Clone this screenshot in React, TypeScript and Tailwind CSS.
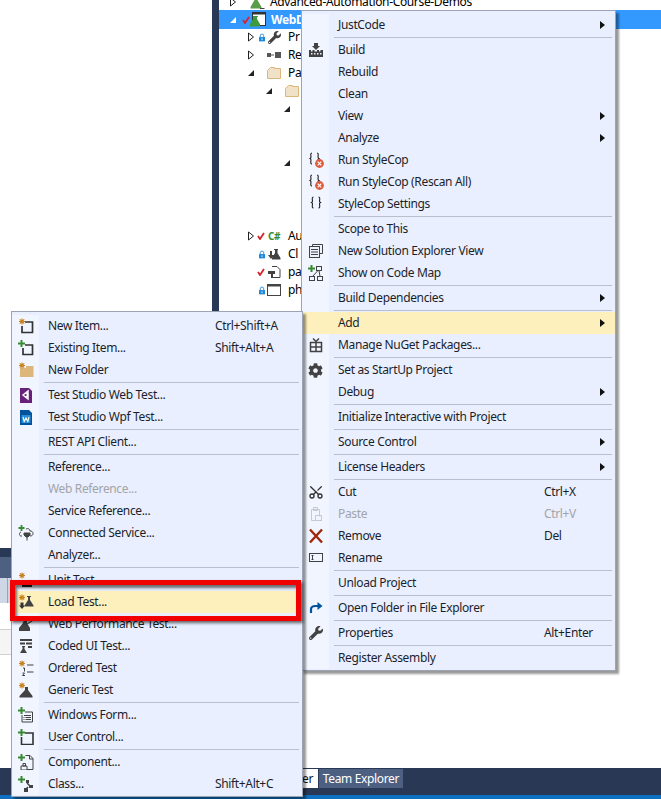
import type { ReactNode } from 'react';
import { FaCog, FaWrench } from 'react-icons/fa';
import { Scissors } from 'lucide-react';

type Item = {
  label?: string;
  shortcut?: string;
  arrow?: boolean;
  disabled?: boolean;
  hot?: boolean;
  icon?: ReactNode;
};

const DARK = '#424242';

function Ico({ children }: { children: ReactNode }) {
  return (
    <svg width="16" height="16" viewBox="0 0 16 16" fill="none">
      {children}
    </svg>
  );
}

const Star = () => (
  <g stroke="#c8811c" strokeWidth="1.1">
    <path d="M4 0.5v6M1 3.5h6M1.8 1.3l4.4 4.4M6.2 1.3l-4.4 4.4" />
  </g>
);

const Plus = () => <path d="M3.5 0v7M0 3.5h7" stroke="#388a34" strokeWidth="2" />;

const Flask = ({ x = 0, y = 0 }: { x?: number; y?: number }) => (
  <path transform={`translate(${x} ${y})`} d="M3 0h4v1h-1v3l3.5 5.5v1h-9v-1L4 4V1H3z" fill={DARK} />
);

const Braces = () => (
  <path
    d="M4 2.5c-2 0-1 3-1 4s-1 1.5-1 1.5 1 .5 1 1.5-1 4 1 4M9 2.5c2 0 1 3 1 4s1 1.5 1 1.5-1 .5-1 1.5 1 4-1 4"
    stroke="#222"
    strokeWidth="1.1"
    transform="translate(0 -1.5)"
  />
);

const StyleCopError = () => (
  <Ico>
    <Braces />
    <circle cx="11.5" cy="11.5" r="4.4" fill="#e05a3a" />
    <path d="M9.7 9.7l3.6 3.6M13.3 9.7l-3.6 3.6" stroke="#fff" strokeWidth="1.2" />
  </Ico>
);

const icons = {
  build: (
    <Ico>
      <path d="M1 15V8h2v1.5h1.5V8h2v1.5H9V8h2v1.5h1.5V8H15v7z" fill={DARK} />
      <path d="M6 1h4v3h2l-4 4-4-4h2z" fill={DARK} />
      <path d="M3 11h1.5v1.5H3zM6 11h1.5v1.5H6zM9 11h1.5v1.5H9zM12 11h1.5v1.5H12z" fill="#eef2fe" />
    </Ico>
  ),
  settings: (
    <Ico>
      <g transform="translate(1.5 0)">
        <Braces />
      </g>
    </Ico>
  ),
  explorerView: (
    <Ico>
      <path d="M4.5 3.5V1.5h10v9H12" stroke={DARK} />
      <rect x="1.5" y="3.5" width="10" height="11" stroke={DARK} fill="#eef2fe" />
      <path d="M3 6.5h7M3 9h7M3 11.5h7" stroke={DARK} />
    </Ico>
  ),
  codeMap: (
    <Ico>
      <path d="M3.5 0v7M0 3.5h7" stroke="#388a34" strokeWidth="2" />
      <rect x="8.5" y="1.5" width="5" height="4" stroke={DARK} />
      <rect x="1.5" y="11.5" width="5" height="4" stroke={DARK} />
      <rect x="9.5" y="11.5" width="5" height="4" stroke={DARK} />
      <path d="M10 5.5L4.5 11.5M11 5.5l1 6" stroke={DARK} />
    </Ico>
  ),
  nuget: (
    <Ico>
      <path d="M2.5 5.5h11v9h-11zM2.5 10h11M8 5.5v9" stroke={DARK} strokeWidth="1.5" />
      <path d="M5 1.5l3 3 3-3" stroke={DARK} strokeWidth="1.5" />
    </Ico>
  ),
  gear: <FaCog size={15} color={DARK} />,
  cut: <Scissors size={16} color="#333" strokeWidth={2} className="rotate-[-90deg]" />,
  paste: (
    <Ico>
      <path d="M3.5 3.5h8v7M3.5 3.5v11h4" stroke="#c6c9cf" />
      <path d="M5.5 1.5h4v3h-4z" stroke="#c6c9cf" />
      <rect x="7.5" y="9.5" width="6" height="5" stroke="#c6c9cf" />
    </Ico>
  ),
  remove: (
    <Ico>
      <path d="M2 1.5l12 13M14 1.5l-12 13" stroke="#a1260d" strokeWidth="2.4" />
    </Ico>
  ),
  rename: (
    <Ico>
      <rect x="1.5" y="3.5" width="13" height="8" stroke={DARK} />
      <path d="M3.5 5.5h2M3.5 9.5h2M4.5 5.5v4" stroke={DARK} />
    </Ico>
  ),
  openFolder: (
    <Ico>
      <path d="M3 13V9.5C3 7 5 6 7.5 6H12" stroke="#00539c" strokeWidth="2.2" />
      <path d="M9.5 2l5 4-5 4z" fill="#00539c" />
    </Ico>
  ),
  wrench: <FaWrench size={14} color={DARK} />,
  newItem: (
    <Ico>
      <Star />
      <path d="M7 4h7.5v10.5H4V8" stroke="#333" strokeWidth="1.7" />
    </Ico>
  ),
  existingItem: (
    <Ico>
      <Plus />
      <path d="M7 5h7.5v9.5H5V8" stroke="#333" strokeWidth="1.7" />
    </Ico>
  ),
  newFolder: (
    <Ico>
      <path d="M2 6h6V4h7.5v11H2z" fill="#dcb67a" />
      <Star />
    </Ico>
  ),
  webTest: (
    <Ico>
      <path d="M2 1h9l3 3v12H2z" fill="#68217a" />
      <path d="M5 8l5-4v8zM8 6l2 2-2 2" stroke="#fff" strokeWidth="1.5" />
    </Ico>
  ),
  wpfTest: (
    <Ico>
      <path d="M2 1h9l3 3v12H2z" fill="#00539c" />
      <rect x="3.5" y="6" width="9" height="8" fill="#2a8dd4" />
      <path d="M5 8l1.2 4.5L8 9l1.8 3.5L11 8" stroke="#fff" strokeWidth="1.1" />
    </Ico>
  ),
  connected: (
    <Ico>
      <path d="M3.5 0v6M0.5 3h6" stroke="#388a34" strokeWidth="1.8" />
      <path d="M3 7c-2 .5-2 4 0 4h1M8 4c2-1 4 0 4 2 2 0 3 1 3 2.5s-1 2.5-3 2.5" stroke={DARK} />
      <path d="M6 8h6v2l-2 2h-2l-2-2zM9 12v3.5" fill={DARK} stroke={DARK} />
    </Ico>
  ),
  unitTest: (
    <Ico>
      <Star />
      <rect x="4" y="9" width="10" height="6" fill="#222" />
    </Ico>
  ),
  loadTest: (
    <Ico>
      <Star />
      <Flask x={6} y={2} />
      <path d="M2.5 8.5h3v3H7L4 15l-3-3.5h1.5z" fill="#333" />
    </Ico>
  ),
  webPerf: (
    <Ico>
      <path d="M5 7l8-5M9 8l5-3" stroke={DARK} strokeWidth="1.2" />
      <path d="M6 4h3v3l3 5v3H1v-3l4-5z" fill={DARK} />
    </Ico>
  ),
  codedUi: (
    <Ico>
      <path d="M2 1h12v2H2zM2 4.5h5v2H2zM8 4.5h6v2H8zM10 8h4v2h-4z" fill={DARK} />
      <path d="M4 8h3v1H6.500v2l2.500 4H2l2.500-4V9H4z" fill={DARK} />
    </Ico>
  ),
  ordered: (
    <Ico>
      <Star />
      <path d="M9 5h6.500M9 12h6.500" stroke={DARK} strokeWidth="1.2" />
      <path d="M5 8h1.500v3.500M4.500 13h2l-2 2.500h2.500" stroke={DARK} />
    </Ico>
  ),
  generic: (
    <Ico>
      <Star />
      <path d="M7 5h3v3l4.500 6v1.500h-13V14L7 8z" fill={DARK} />
    </Ico>
  ),
  windowsForm: (
    <Ico>
      <Plus />
      <path d="M7 5h7.500v10H4V8" stroke={DARK} />
      <path d="M6 8h7v1H6z" fill={DARK} />
      <path d="M7.500 10.500h5.500M7.500 12.500h5.500M5.500 10.500h1M5.500 12.500h1" stroke={DARK} />
    </Ico>
  ),
  userControl: (
    <Ico>
      <Plus />
      <path d="M7 4h8v11.500H3.500V8" stroke="#333" strokeWidth="1.6" />
    </Ico>
  ),
  component: (
    <Ico>
      <Plus />
      <path d="M7.500 1.500H12L15 4.500v11H9M15 5h-3.500V1.500" stroke={DARK} />
      <path d="M3 12h6v4H3zM5 9.500h2.500V12H5z" stroke={DARK} />
    </Ico>
  ),
  classItem: (
    <Ico>
      <Plus />
      <path d="M8 4h3v3H8zM11 9h4v3h-4zM6 12h4v4H6z" fill={DARK} />
      <path d="M9 7l3 3M10 11l-2 2" stroke={DARK} strokeWidth="1.5" />
    </Ico>
  ),
};

const contextMenu: Item[] = [
  { label: 'JustCode', arrow: true },
  {},
  { label: 'Build', icon: icons.build },
  { label: 'Rebuild' },
  { label: 'Clean' },
  { label: 'View', arrow: true },
  { label: 'Analyze', arrow: true },
  { label: 'Run StyleCop', icon: <StyleCopError /> },
  { label: 'Run StyleCop (Rescan All)', icon: <StyleCopError /> },
  { label: 'StyleCop Settings', icon: icons.settings },
  {},
  { label: 'Scope to This' },
  { label: 'New Solution Explorer View', icon: icons.explorerView },
  { label: 'Show on Code Map', icon: icons.codeMap },
  {},
  { label: 'Build Dependencies', arrow: true },
  {},
  { label: 'Add', arrow: true, hot: true },
  { label: 'Manage NuGet Packages...', icon: icons.nuget },
  {},
  { label: 'Set as StartUp Project', icon: icons.gear },
  { label: 'Debug', arrow: true },
  {},
  { label: 'Initialize Interactive with Project' },
  {},
  { label: 'Source Control', arrow: true },
  {},
  { label: 'License Headers', arrow: true },
  {},
  { label: 'Cut', shortcut: 'Ctrl+X', icon: icons.cut },
  { label: 'Paste', shortcut: 'Ctrl+V', disabled: true, icon: icons.paste },
  { label: 'Remove', shortcut: 'Del', icon: icons.remove },
  { label: 'Rename', icon: icons.rename },
  {},
  { label: 'Unload Project' },
  {},
  { label: 'Open Folder in File Explorer', icon: icons.openFolder },
  {},
  { label: 'Properties', shortcut: 'Alt+Enter', icon: icons.wrench },
  {},
  { label: 'Register Assembly' },
];

const addMenu: Item[] = [
  { label: 'New Item...', shortcut: 'Ctrl+Shift+A', icon: icons.newItem },
  { label: 'Existing Item...', shortcut: 'Shift+Alt+A', icon: icons.existingItem },
  { label: 'New Folder', icon: icons.newFolder },
  {},
  { label: 'Test Studio Web Test...', icon: icons.webTest },
  { label: 'Test Studio Wpf Test...', icon: icons.wpfTest },
  {},
  { label: 'REST API Client...' },
  {},
  { label: 'Reference...' },
  { label: 'Web Reference...', disabled: true },
  { label: 'Service Reference...' },
  { label: 'Connected Service...', icon: icons.connected },
  { label: 'Analyzer...' },
  {},
  { label: 'Unit Test...', icon: icons.unitTest },
  { label: 'Load Test...', hot: true, icon: icons.loadTest },
  { label: 'Web Performance Test...', icon: icons.webPerf },
  { label: 'Coded UI Test...', icon: icons.codedUi },
  { label: 'Ordered Test', icon: icons.ordered },
  { label: 'Generic Test', icon: icons.generic },
  {},
  { label: 'Windows Form...', icon: icons.windowsForm },
  { label: 'User Control...', icon: icons.userControl },
  {},
  { label: 'Component...', icon: icons.component },
  { label: 'Class...', shortcut: 'Shift+Alt+C', icon: icons.classItem },
];

function MenuRows({ items, labelWidth }: { items: Item[]; labelWidth: string }) {
  return (
    <>
      {items.map((item, i) =>
        item.label ? (
          <div
            key={i}
            className={`flex h-[22px] items-center ${item.hot ? 'bg-[#fdf0bd]' : ''} ${
              item.disabled ? 'text-[#a2a4a8]' : 'text-[#1c1f2b]'
            }`}
          >
            <div className={`flex h-full w-[27px] shrink-0 items-center justify-center ${item.hot ? '' : 'bg-[#f1f5ff]'}`}>
              {item.icon}
            </div>
            <div className={`shrink-0 whitespace-nowrap pl-[9px] ${labelWidth}`}>{item.label}</div>
            {item.shortcut && <div className="whitespace-nowrap">{item.shortcut}</div>}
            {item.arrow && (
              <svg className="ml-auto mr-[10px]" width="5" height="8" viewBox="0 0 5 8">
                <path d="M0 0l5 4-5 4z" fill="#111" />
              </svg>
            )}
          </div>
        ) : (
          <div key={i} className="flex h-[3px]">
            <div className="w-[27px] bg-[#f1f5ff]" />
            <div className="ml-[5px] mr-[3px] flex-1 pt-px">
              <div className="h-px bg-[#b9bfcd]" />
            </div>
          </div>
        ),
      )}
    </>
  );
}

function TreeArrow({ open }: { open?: boolean }) {
  return open ? (
    <svg width="8" height="8" viewBox="0 0 8 8">
      <path d="M7 1v6H1z" fill="#222" />
    </svg>
  ) : (
    <svg width="8" height="10" viewBox="0 0 8 10">
      <path d="M1.5 1l5 4-5 4z" fill="#fff" stroke="#222" />
    </svg>
  );
}

const Lock = () => (
  <svg width="6" height="9" viewBox="0 0 7 9">
    <path d="M1.5 4V2.500a2 2 0 014 0V4" stroke="#1e88d8" fill="none" />
    <rect y="4" width="7" height="5" fill="#1e88d8" />
    <rect x="3" y="5.500" width="1" height="2" fill="#fff" />
  </svg>
);

const Check = () => (
  <svg width="8" height="8" viewBox="0 0 8 8">
    <path d="M1 4l2 3 4-6" stroke="#d8232a" strokeWidth="1.8" fill="none" />
  </svg>
);

const FolderIcon = () => (
  <svg width="14" height="12" viewBox="0 0 14 12">
    <path d="M0.5 3.500l3-3h4v1h6v10h-13z" fill="#f0e2c8" stroke="#dcb67a" />
  </svg>
);

// one row of the tree behind the menus
function TreeRow({ indent, twisty, mark, icon, text }: {
  indent: string;
  twisty?: ReactNode;
  mark?: ReactNode;
  icon?: ReactNode;
  text?: string;
}) {
  return (
    <div className={`flex h-[18px] items-center ${indent}`}>
      <div className="flex w-[10px] shrink-0 justify-center">{twisty}</div>
      <div className="flex w-[9px] shrink-0 justify-end">{mark}</div>
      <div className="flex w-[18px] shrink-0 justify-center">{icon}</div>
      <div className="whitespace-nowrap pl-[5px] text-black">{text}</div>
    </div>
  );
}

function TreeArrowWhite() {
  return (
    <svg className="ml-[1px]" width="8" height="8" viewBox="0 0 8 8">
      <path d="M7 1v6H1z" fill="#fff" />
    </svg>
  );
}

export default function App() {
  return (
    <div className="relative flex h-[799px] w-[661px] flex-col overflow-hidden bg-white font-['Noto_Sans',sans-serif] text-[12px] leading-none tracking-[-0.35px]">
      <div className="flex h-[768px]">
        <div className="flex w-[212px] flex-col">
          <div className="h-[548px] bg-white" />
          <div className="h-[9px] bg-[#293955]" />
          <div className="h-[21px] bg-[#4d6082]" />
          <div className="h-[25px] bg-[#cfd6e5] pl-[7px]">
            <div className="h-full w-px bg-[#9aa3b5]" />
          </div>
          <div className="h-[27px] border-b border-[#d0d0d0] bg-white" />
          <div className="h-[25px] border-b border-[#d0d0d0] bg-[#f5f5f5]" />
          <div className="flex-1 bg-white" />
        </div>
        <div className="w-[7px] bg-[#293955]" />
        <div className="relative flex-1 pt-[10px]">
          <div className="absolute left-0 top-[-7px] w-full">
            <TreeRow
              indent="pl-[9px]"
              twisty={<TreeArrow />}
              icon={
                <svg width="17" height="15" viewBox="0 0 17 15">
                  <path d="M6 1h4v1H9.500v3l4 7v1.500h-11V12l4-7V2H6z" fill="#5a9e4b" />
                  <path d="M12 13.500h4.500" stroke="#444" />
                </svg>
              }
              text="Advanced-Automation-Course-Demos"
            />
          </div>
          <div className="-mb-px h-[19px] bg-[#3399ff]">
            <div className="flex h-full items-center pl-[9px]">
              <TreeArrowWhite />
              <div className="ml-[5px]">
                <Check />
              </div>
              <svg width="16" height="15" viewBox="0 0 16 15">
                <rect x="2.5" y="0.5" width="13" height="13" fill="#fff" stroke="#333" />
                <rect x="2.5" y="0.5" width="13" height="2" fill="#333" />
                <path d="M3 4h5v1H7v2l3 5v2.500H0V12l3-5V5H3z" fill="#3d9a3d" />
              </svg>
              <span className="pl-[5px] font-bold text-white">WebD</span>
            </div>
          </div>
          <TreeRow
            indent="pl-[27px]"
            twisty={<TreeArrow />}
            mark={<Lock />}
            icon={<FaWrench size={13} color={DARK} />}
            text="Pr"
          />
          <TreeRow
            indent="pl-[27px]"
            twisty={<TreeArrow />}
            icon={
              <svg width="14" height="6" viewBox="0 0 14 6">
                <rect y="1" width="4" height="4" fill="#555" />
                <rect x="4" y="2.500" width="3" height="1" fill="#555" />
                <rect x="8" width="6" height="6" fill="#555" />
              </svg>
            }
            text="Re"
          />
          <TreeRow indent="pl-[27px]" twisty={<TreeArrow open />} icon={<FolderIcon />} text="Pa" />
          <TreeRow indent="pl-[45px]" twisty={<TreeArrow open />} icon={<FolderIcon />} />
          <TreeRow indent="pl-[63px]" twisty={<TreeArrow open />} />
          <div className="h-[36px]" />
          <TreeRow indent="pl-[63px]" twisty={<TreeArrow open />} />
          <div className="h-[55px]" />
          <TreeRow
            indent="pl-[27px]"
            twisty={<TreeArrow />}
            mark={<Check />}
            icon={<span className="text-[10px] font-bold text-[#388a34]">C#</span>}
            text="Au"
          />
          <TreeRow
            indent="pl-[27px]"
            mark={<Lock />}
            icon={
              <svg width="14" height="14" viewBox="0 0 14 14">
                <path d="M7 2h4v1h-.5v3l3 5v1.500H5V11l3-5V3H7zM3 4h2v4h2l-3 4-3-4h2z" fill={DARK} />
              </svg>
            }
            text="Cl"
          />
          <TreeRow
            indent="pl-[27px]"
            mark={<Check />}
            icon={
              <svg width="14" height="14" viewBox="0 0 14 14">
                <path d="M5 1.5h5l3 3v8H5" stroke={DARK} fill="none" />
                <path d="M1 6h7v3H6v4H4V9H1z" fill={DARK} />
              </svg>
            }
            text="pa"
          />
          <TreeRow
            indent="pl-[27px]"
            mark={<Lock />}
            icon={
              <svg width="14" height="12" viewBox="0 0 14 12">
                <rect x="0.5" y="0.5" width="13" height="11" fill="#fff" stroke="#444" />
                <rect x="0.5" y="0.5" width="13" height="2" fill="#444" />
              </svg>
            }
            text="ph"
          />
        </div>
      </div>

      <div className="flex h-[27px] bg-[#293955] pl-[240px] pt-px">
        <div className="flex h-[19px] w-[78px] items-center justify-end bg-white pr-[5px] text-[#111]">er</div>
        <div className="ml-px flex h-[19px] w-[84px] items-center justify-center bg-[#4d6082] text-white">Team Explorer</div>
      </div>
      <div className="flex-1 bg-[#0e70c0]" />

      <div className="absolute left-[301px] top-[10px] h-[661px] w-[315px] border border-[#9ba3b5] bg-[#e9effe] pt-[3px] shadow-[3px_3px_2px_rgba(0,0,0,0.4)]">
        <MenuRows items={contextMenu} labelWidth="w-[215px]" />
      </div>

      <div className="absolute left-[11px] top-[311px] h-[486px] w-[292px] border border-[#9ba3b5] bg-[#e9effe] pt-[3px] shadow-[3px_3px_2px_rgba(0,0,0,0.4)]">
        <MenuRows items={addMenu} labelWidth="w-[176px]" />
      </div>

      {/* red callout drawn over the screenshot */}
      <div className="absolute left-[10px] top-[580px] h-[41px] w-[291px] border-[5px] border-[#f00000] shadow-[2px_2px_3px_rgba(0,0,0,0.6),inset_2px_3px_3px_rgba(0,0,0,0.55)]" />
    </div>
  );
}
